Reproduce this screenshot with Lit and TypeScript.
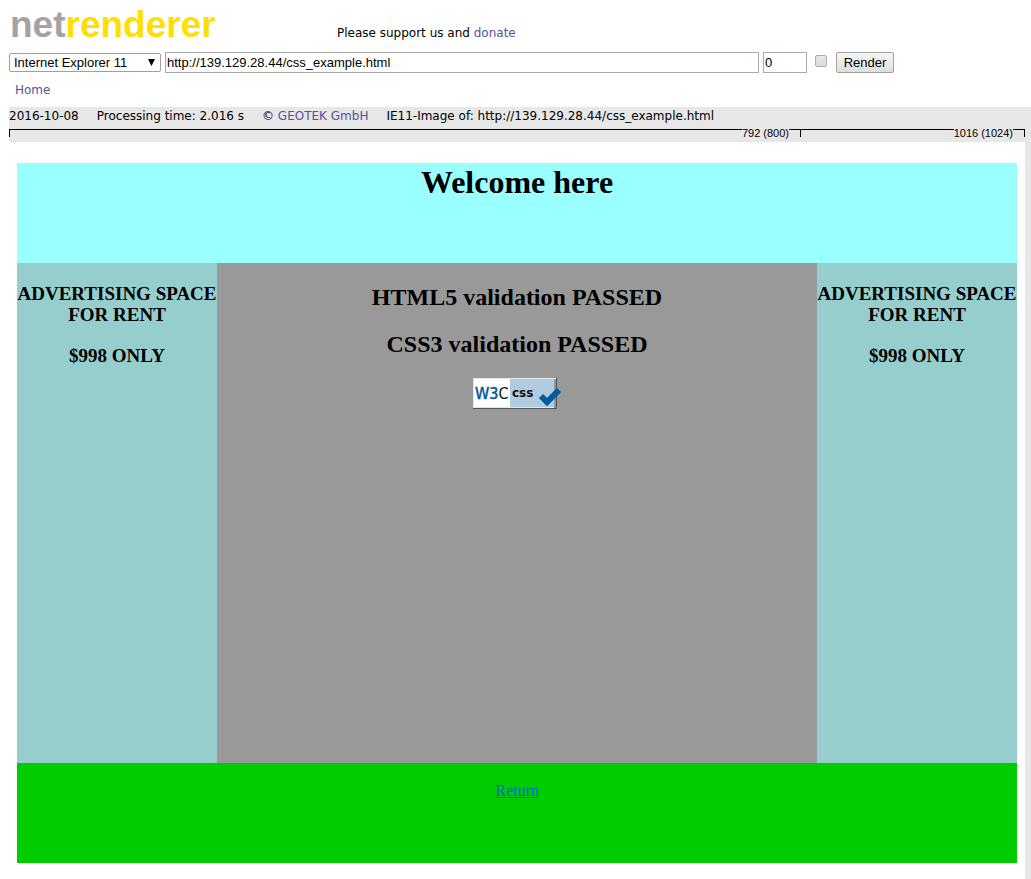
import { LitElement, html, css } from 'lit';
import { customElement } from 'lit/decorators.js';

@customElement('w3c-badge')
class W3cBadge extends LitElement {
  static styles = css`
    :host { display: block; line-height: 0; }
    .w3c { font: 16px "DejaVu Sans Condensed", "DejaVu Sans", sans-serif; stroke-width: 0.5px; }
    .label { font: bold 12px "DejaVu Sans", sans-serif; }
  `;

  render() {
    return html`
      <svg width="88" height="31" viewBox="0 0 88 31" role="img" aria-label="Valid CSS">
        <rect width="84" height="31" fill="#555" />
        <rect width="83" height="30" fill="#e6e6e6" />
        <rect x="1" y="1" width="36" height="28" fill="#fff" />
        <rect x="37" y="1" width="44" height="28" fill="#b1cce0" />
        <rect x="81" y="1" width="2" height="29" fill="#8a97a3" />
        <text class="w3c" x="2" y="21" fill="#005a9c" stroke="#005a9c">W3<tspan fill="#111" stroke="none">C</tspan></text>
        <text class="label" x="39" y="19" fill="#111">css</text>
        <path d="M68 18 L74 24 L86 12" fill="none" stroke="#005a9c" stroke-width="6" />
      </svg>
    `;
  }
}

@customElement('app-root')
class AppRoot extends LitElement {
  static styles = css`
    :host {
      display: flex;
      flex-direction: column;
      min-height: 100vh;
      box-sizing: border-box;
      padding-left: 9px;
      background: #fff;
      color: #000;
      font: 12px/18px "DejaVu Sans", sans-serif;
    }
    a { color: #5a50a0; text-decoration: none; }
    .top { display: flex; align-items: flex-end; padding-top: 8px; height: 34px; }
    .logo { width: 328px; padding-left: 1px; box-sizing: border-box; font: bold 37px/34px "Liberation Sans", sans-serif; color: #a5a2a5; }
    .logo span { color: #ffdf00; }
    .form { display: flex; align-items: center; gap: 4px; margin: 10px 0 0; }
    .form select, .form input, .form button {
      box-sizing: border-box;
      margin: 0;
      font: 13px "Liberation Sans", sans-serif;
      color: #000;
    }
    .picker { position: relative; display: flex; }
    .picker select {
      width: 152px; height: 19px; padding: 0 4px; appearance: none;
      border: 1px solid #a0a0a0; border-radius: 2px; background: #fff;
    }
    .picker svg { position: absolute; right: 6px; top: 6px; pointer-events: none; }
    .form .text { height: 21px; padding: 1px; border: 1px solid #a9a9a9; background: #fff; }
    .url { width: 594px; }
    .num { width: 44px; }
    .form .check {
      appearance: none; width: 12px; height: 12px; margin: 0 5px 4px 4px;
      border: 1px solid #adadad; border-radius: 2px;
      background: linear-gradient(#e8e8e8, #d9d9d9);
    }
    .form button {
      width: 58px; height: 21px; padding: 0; border: 1px solid #a0a0a0; border-radius: 2px;
      background: linear-gradient(#f6f6f6, #dedede);
    }
    .nav { padding: 8px 6px 7px; }
    .nav a { display: block; line-height: 19px; }
    .result { flex: 1; display: flex; flex-direction: column; background: #e7e7e7; padding-right: 6px; }
    .info { display: flex; gap: 18px; line-height: 19px; }
    .ruler { display: flex; height: 16px; box-sizing: border-box; padding-top: 3px; }
    .span { display: flex; font: 11px/8px "Liberation Sans", sans-serif; }
    .line { border-top: 1px solid #000; height: 7px; }
    .grow { flex: 1; }
    .start { border-left: 1px solid #000; }
    .end { width: 11px; border-right: 1px solid #000; }
    .near { flex: 792; }
    .far { flex: 224; }
    .shot { flex: 1; background: #fff; padding: 21px 8px 16px; font: 16px/18px "Liberation Serif", serif; text-align: center; }
    .banner { background: #99ffff; height: 100px; }
    h1 { margin: 0; font-size: 32px; line-height: 38px; }
    .columns { display: grid; grid-template-columns: 1fr 3fr 1fr; min-height: 500px; }
    .ad { background: #96cdcd; padding-top: 20px; }
    .ad h3 { margin: 0 0 20px; font-size: 19px; line-height: 21px; }
    .main { background: #999; padding-top: 21px; display: flex; flex-direction: column; align-items: center; }
    h2 { margin: 0 0 20px; font-size: 24px; line-height: 27px; }
    .foot { background: #00cd00; height: 100px; box-sizing: border-box; padding-top: 19px; }
    .foot a { color: #0066cc; text-decoration: underline; }
  `;

  private ad() {
    return html`
      <aside class="ad">
        <h3>ADVERTISING SPACE<br />FOR RENT</h3>
        <h3>$998 ONLY</h3>
      </aside>
    `;
  }

  render() {
    return html`
      <header class="top">
        <div class="logo">net<span>renderer</span></div>
        <div>Please support us and <a href="#donate">donate</a></div>
      </header>
      <form class="form" @submit=${(e: Event) => e.preventDefault()}>
        <div class="picker">
          <select aria-label="Browser"><option>Internet Explorer 11</option></select>
          <svg width="7" height="7" viewBox="0 0 7 7"><path d="M0 0h7L3.5 7z" /></svg>
        </div>
        <input class="text url" type="text" aria-label="Address" value="http://139.129.28.44/css_example.html" />
        <input class="text num" type="text" aria-label="Offset" value="0" />
        <input class="check" type="checkbox" aria-label="Option" />
        <button type="submit">Render</button>
      </form>
      <nav class="nav"><a href="#home">Home</a></nav>
      <section class="result">
        <div class="info">
          <span>2016-10-08</span>
          <span>Processing time: 2.016 s</span>
          <span>© <a href="#geotek">GEOTEK GmbH</a></span>
          <span>IE11-Image of: http://139.129.28.44/css_example.html</span>
        </div>
        <div class="ruler">
          <div class="span near"><i class="line grow start"></i>792 (800)<i class="line end"></i></div>
          <div class="span far"><i class="line grow"></i>1016 (1024)<i class="line end"></i></div>
        </div>
        <div class="shot">
          <header class="banner"><h1>Welcome here</h1></header>
          <div class="columns">
            ${this.ad()}
            <main class="main">
              <h2>HTML5 validation PASSED</h2>
              <h2>CSS3 validation PASSED</h2>
              <w3c-badge></w3c-badge>
            </main>
            ${this.ad()}
          </div>
          <footer class="foot"><a href="#return">Return</a></footer>
        </div>
      </section>
    `;
  }
}
